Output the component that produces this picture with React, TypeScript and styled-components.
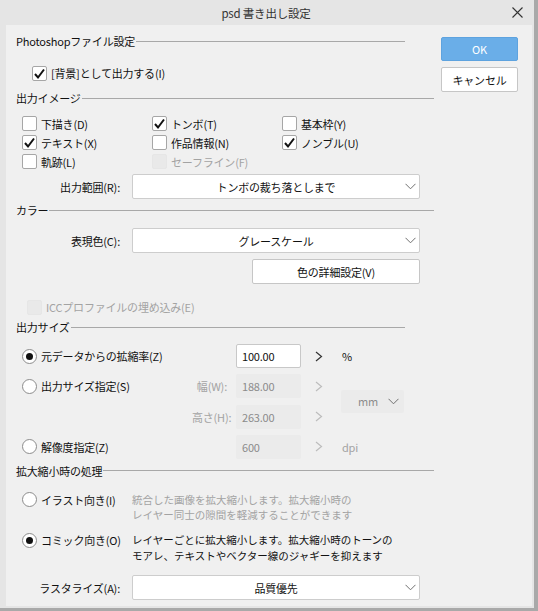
import styled, { createGlobalStyle } from 'styled-components';

const GlobalStyle = createGlobalStyle`
  html, body {
    margin: 0;
    padding: 0;
    background: #e5e5e5;
  }
  body {
    font-family: 'Noto Sans CJK JP', 'Noto Sans', sans-serif;
    font-size: 11px;
    letter-spacing: -0.2px;
    color: #111;
  }
`;

function CheckIcon() {
  return (
    <svg width='13' height='13' viewBox='0 0 13 13'>
      <path d='M2 7 L5 10.5 L11 2.5' fill='none' stroke='#111' strokeWidth='2' />
    </svg>
  );
}

function ChevronDown() {
  return (
    <svg width='11' height='7' viewBox='0 0 11 7'>
      <path d='M0.5 0.8 L5.5 5.8 L10.5 0.8' fill='none' stroke='#707070' strokeWidth='1' />
    </svg>
  );
}

function ChevronRight({ muted }: { muted?: boolean }) {
  return (
    <svg width='8' height='11' viewBox='0 0 8 11'>
      <path
        d='M1 1 L6.5 5.5 L1 10'
        fill='none'
        stroke={muted ? '#bdbdbd' : '#333'}
        strokeWidth='1.2'
      />
    </svg>
  );
}

function CloseIcon() {
  return (
    <svg width='11' height='11' viewBox='0 0 11 11'>
      <path d='M0.5 0.5 L10.5 10.5 M10.5 0.5 L0.5 10.5' stroke='#333' strokeWidth='1.1' />
    </svg>
  );
}

function Check({ checked, disabled, children }: { checked?: boolean; disabled?: boolean; children: string }) {
  return (
    <CheckRow $disabled={disabled}>
      <Box $disabled={disabled}>{checked && <CheckIcon />}</Box>
      <span>{children}</span>
    </CheckRow>
  );
}

function Radio({ checked, children }: { checked?: boolean; children: string }) {
  return (
    <RadioRow>
      <Circle>{checked && <Dot />}</Circle>
      <span>{children}</span>
    </RadioRow>
  );
}

function Select({ value }: { value: string }) {
  return (
    <SelectBox>
      <SelectText>{value}</SelectText>
      <SelectArrow>
        <ChevronDown />
      </SelectArrow>
    </SelectBox>
  );
}

function Section({ title, short }: { title: string; short?: boolean }) {
  return (
    <Header $short={short}>
      <span>{title}</span>
      <HeaderLine />
    </Header>
  );
}

export default function App() {
  return (
    <>
      <GlobalStyle />
      <Window>
        <TitleBar>
          <span />
          <Title>psd 書き出し設定</Title>
          <CloseButton>
            <CloseIcon />
          </CloseButton>
        </TitleBar>
        <Body>
          <Main>
            <Section title='Photoshopファイル設定' short />
            <BackgroundRow>
              <Check checked>[背景]として出力する(I)</Check>
            </BackgroundRow>

            <Spaced $top={8}>
              <Section title='出力イメージ' />
            </Spaced>
            <CheckGrid>
              <Check>下描き(D)</Check>
              <Check checked>トンボ(T)</Check>
              <Check>基本枠(Y)</Check>
              <Check checked>テキスト(X)</Check>
              <Check>作品情報(N)</Check>
              <Check checked>ノンブル(U)</Check>
              <Check>軌跡(L)</Check>
              <Check disabled>セーフライン(F)</Check>
            </CheckGrid>
            <FormRow $top={3}>
              <Label>出力範囲(R):</Label>
              <Select value='トンボの裁ち落としまで' />
            </FormRow>

            <Spaced $top={3}>
              <Section title='カラー' />
            </Spaced>
            <FormRow $top={10}>
              <Label>表現色(C):</Label>
              <Select value='グレースケール' />
            </FormRow>
            <DetailRow>
              <PlainButton>色の詳細設定(V)</PlainButton>
            </DetailRow>
            <IccRow>
              <Check disabled>ICCプロファイルの埋め込み(E)</Check>
            </IccRow>

            <Spaced $top={3}>
              <Section title='出力サイズ' short />
            </Spaced>
            <SizeGrid>
              <Radio checked>元データからの拡縮率(Z)</Radio>
              <span />
              <NumberBox>100.00</NumberBox>
              <ArrowCell>
                <ChevronRight />
              </ArrowCell>
              <Unit>%</Unit>

              <Radio>出力サイズ指定(S)</Radio>
              <SizeLabel>幅(W):</SizeLabel>
              <NumberBox $disabled>188.00</NumberBox>
              <ArrowCell>
                <ChevronRight muted />
              </ArrowCell>
              <UnitSelect>
                <span>mm</span>
                <ChevronDown />
              </UnitSelect>

              <span />
              <SizeLabel>高さ(H):</SizeLabel>
              <NumberBox $disabled>263.00</NumberBox>
              <ArrowCell>
                <ChevronRight muted />
              </ArrowCell>

              <Radio>解像度指定(Z)</Radio>
              <span />
              <NumberBox $disabled>600</NumberBox>
              <ArrowCell>
                <ChevronRight muted />
              </ArrowCell>
              <Unit $muted>dpi</Unit>
            </SizeGrid>

            <Spaced $top={4}>
              <Section title='拡大縮小時の処理' />
            </Spaced>
            <ModeRow $top={13}>
              <Radio>イラスト向き(I)</Radio>
              <Description $muted>
                <span>統合した画像を拡大縮小します。拡大縮小時の</span>
                <span>レイヤー同士の隙間を軽減することができます</span>
              </Description>
            </ModeRow>
            <ModeRow $top={10}>
              <Radio checked>コミック向き(O)</Radio>
              <Description>
                <span>レイヤーごとに拡大縮小します。拡大縮小時のトーンの</span>
                <span>モアレ、テキストやベクター線のジャギーを抑えます</span>
              </Description>
            </ModeRow>
            <FormRow $top={12}>
              <Label>ラスタライズ(A):</Label>
              <Select value='品質優先' />
            </FormRow>
          </Main>
          <Side>
            <PrimaryButton>OK</PrimaryButton>
            <PlainButton>キャンセル</PlainButton>
          </Side>
        </Body>
      </Window>
    </>
  );
}

const Window = styled.div`
  width: 538px;
  height: 611px;
  box-sizing: border-box;
  display: flex;
  flex-direction: column;
  background: #e5e5e5;
  padding: 0 2px 2px 6px;
  border-right: 4px solid #a9a9a9;
  border-bottom: 3px solid #a9a9a9;
`;

const TitleBar = styled.div`
  height: 25px;
  display: grid;
  grid-template-columns: 1fr auto 1fr;
  align-items: center;
  margin-left: -6px;
`;

const Title = styled.span`
  font-size: 11.5px;
  color: #333;
`;

const CloseButton = styled.div`
  justify-self: end;
  display: flex;
  margin-right: 9px;
`;

const Body = styled.div`
  flex: 1;
  display: grid;
  grid-template-columns: 428px 77px;
  column-gap: 7px;
  background: #f0f0f0;
`;

const Main = styled.div`
  display: flex;
  flex-direction: column;
  padding: 8px 0 0 10px;
`;

const Side = styled.div`
  display: flex;
  flex-direction: column;
  gap: 6px;
  padding-top: 12px;
`;

const Header = styled.div<{ $short?: boolean }>`
  display: flex;
  align-items: center;
  gap: 1px;
  height: 16px;
  margin-right: ${({ $short }) => ($short ? '29px' : '0')};
  color: #111;
`;

const HeaderLine = styled.div`
  flex: 1;
  height: 1px;
  background: #a8a8a8;
`;

const Spaced = styled.div<{ $top: number }>`
  margin-top: ${({ $top }) => $top}px;
`;

const BackgroundRow = styled.div`
  margin-top: 15px;
  padding-left: 16px;
  height: 18px;
  display: flex;
  align-items: center;
`;

const CheckRow = styled.label<{ $disabled?: boolean }>`
  display: flex;
  align-items: center;
  gap: 4px;
  white-space: nowrap;
  color: ${({ $disabled }) => ($disabled ? '#a3a3a3' : '#111')};
`;

const Box = styled.span<{ $disabled?: boolean }>`
  width: 15px;
  height: 15px;
  box-sizing: border-box;
  border: 1px solid ${({ $disabled }) => ($disabled ? '#e6e6e6' : '#a6a6a6')};
  border-radius: 2px;
  background: ${({ $disabled }) => ($disabled ? '#e9e9e9' : '#fff')};
  display: flex;
  align-items: center;
  justify-content: center;
`;

const CheckGrid = styled.div`
  margin-top: 8px;
  padding-left: 6px;
  display: grid;
  grid-template-columns: 130px 130px 130px;
  grid-auto-rows: 19px;
  align-items: center;
`;

const FormRow = styled.div<{ $top: number }>`
  margin-top: ${({ $top }) => $top}px;
  display: grid;
  grid-template-columns: 104px 288px;
  column-gap: 12px;
  align-items: center;
`;

const Label = styled.span`
  text-align: right;
  white-space: nowrap;
`;

const SelectBox = styled.div`
  height: 25px;
  box-sizing: border-box;
  background: #fff;
  border: 1px solid #cdcdcd;
  border-radius: 2px;
  display: grid;
  align-items: center;
`;

const SelectText = styled.span`
  grid-area: 1 / 1;
  text-align: center;
`;

const SelectArrow = styled.span`
  grid-area: 1 / 1;
  justify-self: end;
  display: flex;
  margin-right: 3px;
`;

const DetailRow = styled.div`
  margin-top: 6px;
  display: flex;
  justify-content: flex-end;
  width: 404px;
`;

const PlainButton = styled.div`
  height: 25px;
  box-sizing: border-box;
  min-width: 77px;
  padding: 0 10px;
  background: #fff;
  border: 1px solid #c6c6c6;
  border-radius: 2px;
  display: flex;
  align-items: center;
  justify-content: center;
  white-space: nowrap;
  color: #111;

  ${DetailRow} & {
    width: 168px;
  }
`;

const PrimaryButton = styled.div`
  height: 24px;
  box-sizing: border-box;
  background: #6aaee8;
  border: 1px solid #5ea3df;
  border-radius: 2px;
  display: flex;
  align-items: center;
  justify-content: center;
  color: #fff;
`;

const IccRow = styled.div`
  margin-top: 14px;
  height: 18px;
  padding-left: 11px;
  display: flex;
  align-items: center;
`;

const SizeGrid = styled.div`
  margin-top: 9px;
  padding-left: 6px;
  display: grid;
  grid-template-columns: 170px 35px 74px 40px 64px;
  grid-template-rows: repeat(4, 24px);
  row-gap: 6.3px;
  align-items: center;
`;

const RadioRow = styled.label`
  display: flex;
  align-items: center;
  gap: 4px;
  white-space: nowrap;
  color: #111;
`;

const Circle = styled.span`
  width: 15px;
  height: 15px;
  box-sizing: border-box;
  border: 1px solid #8c8c8c;
  border-radius: 50%;
  background: #fff;
  display: flex;
  align-items: center;
  justify-content: center;
`;

const Dot = styled.span`
  width: 7px;
  height: 7px;
  border-radius: 50%;
  background: #111;
`;

const SizeLabel = styled.span`
  text-align: right;
  color: #a3a3a3;
  white-space: nowrap;
`;

const NumberBox = styled.div<{ $disabled?: boolean }>`
  margin-left: 9px;
  width: 65px;
  height: 24px;
  box-sizing: border-box;
  padding-left: 5px;
  display: flex;
  align-items: center;
  border-radius: 2px;
  background: ${({ $disabled }) => ($disabled ? '#ebebeb' : '#fff')};
  border: 1px solid ${({ $disabled }) => ($disabled ? '#ebebeb' : '#c8c8c8')};
  color: ${({ $disabled }) => ($disabled ? '#8c8c8c' : '#111')};
`;

const ArrowCell = styled.span`
  display: flex;
  padding-left: 14px;
`;

const Unit = styled.span<{ $muted?: boolean }>`
  padding-left: 1px;
  color: ${({ $muted }) => ($muted ? '#a3a3a3' : '#111')};
`;

const UnitSelect = styled.div`
  grid-column: 5;
  grid-row: 2 / span 2;
  height: 23px;
  width: 63px;
  box-sizing: border-box;
  background: #ebebeb;
  border-radius: 2px;
  display: flex;
  align-items: center;
  justify-content: space-between;
  padding: 0 5px 0 17px;
  color: #8c8c8c;
`;

const ModeRow = styled.div<{ $top: number }>`
  margin-top: ${({ $top }) => $top}px;
  padding-left: 6px;
  display: grid;
  grid-template-columns: 110px 1fr;
  align-items: start;
`;

const Description = styled.div<{ $muted?: boolean }>`
  display: flex;
  flex-direction: column;
  font-size: 10.5px;
  letter-spacing: 0;
  line-height: 15.3px;
  white-space: nowrap;
  color: ${({ $muted }) => ($muted ? '#a3a3a3' : '#111')};
`;
